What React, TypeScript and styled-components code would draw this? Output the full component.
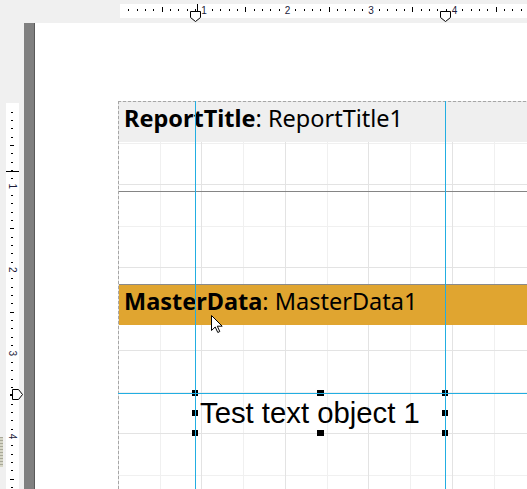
import React from "react";
import styled, { createGlobalStyle } from "styled-components";

const Global = createGlobalStyle`
  html, body { margin: 0; padding: 0; }
  body { background: #f0f0f0; font-family: "Noto Sans", sans-serif; }
`;

const Frame = styled.div`
  position: relative;
  width: 527px;
  height: 489px;
  overflow: hidden;
  background: #f0f0f0;
  display: flex;
  flex-direction: column;
`;

const TopRulerRow = styled.div`
  flex: none;
  height: 23px;
  box-sizing: border-box;
  padding: 4px 0 0 120px;
  display: flex;
  align-items: flex-start;
`;

const TopRuler = styled.div`
  flex: 1;
  height: 14px;
  background: #ffffff;
`;

const Workspace = styled.div`
  flex: 1;
  display: flex;
  min-height: 0;
`;

const LeftRulerColumn = styled.div`
  flex: none;
  width: 24px;
  box-sizing: border-box;
  padding: 80px 0 0 6px;
  display: flex;
  flex-direction: column;
`;

const LeftRuler = styled.div`
  flex: 1;
  width: 13px;
  background: #ffffff;
`;

const PageEdge = styled.div`
  flex: none;
  width: 10px;
  background: #808080;
  border-right: 1px solid #5a5a5a;
`;

const Page = styled.div`
  flex: 1;
  min-width: 0;
  background: #ffffff;
  box-sizing: border-box;
  padding: 78px 0 0 83px;
  display: flex;
  flex-direction: column;
  overflow: hidden;
`;

const DesignSurface = styled.div`
  position: relative;
  flex: 1;
  box-sizing: border-box;
  padding: 1px 0 0 1px;
  display: flex;
  flex-direction: column;
  background:
    repeating-linear-gradient(to right, #a6a6a6 0 3px, transparent 3px 5px) top left / 100% 1px no-repeat,
    repeating-linear-gradient(to bottom, #a6a6a6 0 3px, transparent 3px 5px) top left / 1px 100% no-repeat,
    repeating-linear-gradient(to right, #e3e3e3 0 1px, transparent 1px 83.5px),
    repeating-linear-gradient(to bottom, #e3e3e3 0 1px, transparent 1px 83px),
    repeating-linear-gradient(to right, #f0f0f0 0 1px, transparent 1px 41.75px),
    repeating-linear-gradient(to bottom, #f0f0f0 0 1px, transparent 1px 41.5px);
`;

const BandCaption = styled.div<{ $bg: string; $topLine?: boolean }>`
  flex: none;
  box-sizing: border-box;
  height: ${(p) => (p.$topLine ? "41px" : "40px")};
  background: ${(p) => p.$bg};
  border-top: ${(p) => (p.$topLine ? "1px solid #8a8a8a" : "none")};
  padding: 1px 0 0 5px;
  font-family: "Noto Sans", sans-serif;
  font-size: 23.5px;
  line-height: 30px;
  color: #000;
  white-space: nowrap;
`;

const BandName = styled.b`
  font-weight: 700;
`;

const BandBody = styled.div<{ $h: number; $bottomLine?: boolean }>`
  flex: none;
  height: ${(p) => p.$h}px;
  border-bottom: ${(p) => (p.$bottomLine ? "1px solid #858585" : "none")};
`;

const DataBandBody = styled.div`
  position: relative;
  flex: 1;
`;

const TextObject = styled.div`
  position: absolute;
  left: 76px;
  top: 68px;
  width: 250px;
  height: 40px;
  box-sizing: border-box;
  padding: 3px 0 0 5px;
  font-family: "Liberation Sans", Arial, sans-serif;
  font-size: 29.3px;
  color: #000;
  white-space: nowrap;
`;

const HandleFrame = styled.div`
  position: absolute;
  inset: -3px;
  display: grid;
  grid-template-columns: 6px 1fr 6px;
  grid-template-rows: 6px 1fr 6px;
  pointer-events: none;
`;

const Handle = styled.span<{ $col: number; $row: number; $w: number }>`
  grid-column: ${(p) => p.$col};
  grid-row: ${(p) => p.$row};
  justify-self: center;
  align-self: center;
  width: ${(p) => p.$w}px;
  height: 6px;
  background: #000;
`;

const VGuide = styled.div<{ $x: number }>`
  position: absolute;
  left: ${(p) => p.$x}px;
  top: 0;
  bottom: 0;
  width: 1px;
  background: #22aee2;
  z-index: 2;
`;

const HGuide = styled.div<{ $y: number }>`
  position: absolute;
  top: ${(p) => p.$y}px;
  left: 0;
  right: 0;
  height: 1px;
  background: #22aee2;
  z-index: 2;
`;

const RulerSvg = styled.svg`
  display: block;
  overflow: visible;
`;

const Grip = styled.div`
  position: absolute;
  left: 0;
  top: 437px;
  width: 3px;
  height: 30px;
  background: repeating-linear-gradient(to bottom, #a8a898 0 1px, #d6d6c6 1px 3px);
`;

const Cursor = styled.svg`
  position: absolute;
  left: 211px;
  top: 315px;
  overflow: visible;
  z-index: 5;
`;

const rulerText = {
  fontFamily: '"Liberation Sans", Arial, sans-serif',
  fontSize: 10,
  fill: "#1c1c3a",
} as const;

function TopRulerDrawing() {
  const items: React.ReactNode[] = [];
  for (let k = 1; k * 8.35 < 410; k++) {
    const x = Math.round(k * 8.35);
    if (k % 10 === 0) {
      items.push(
        <text key={k} x={83.5 * (k / 10) + 0.5} y={10} textAnchor="middle" style={rulerText}>
          {k / 10}
        </text>
      );
    } else if (k % 5 === 0) {
      items.push(<rect key={k} x={x} y={3} width={1} height={5} fill="#000" />);
    } else {
      items.push(<rect key={k} x={x} y={5} width={1} height={2} fill="#000" />);
    }
  }
  const marker = (cx: number) =>
    `${cx - 5},7.5 ${cx + 5},7.5 ${cx + 5},13.5 ${cx},17.5 ${cx - 5},13.5`;
  return (
    <RulerSvg width={407} height={14}>
      {items}
      <rect x={77} y={0} width={1} height={7} fill="#000" />
      <polygon points={marker(75.5)} fill="#fff" stroke="#000" strokeWidth={1} />
      <polygon points={marker(325.5)} fill="#fff" stroke="#000" strokeWidth={1} />
    </RulerSvg>
  );
}

function LeftRulerDrawing() {
  const items: React.ReactNode[] = [];
  for (let k = 1; k * 8.34 < 390; k++) {
    const y = Math.round(k * 8.34 + 0.3);
    if (k % 10 === 0) {
      const cy = 83.4 * (k / 10);
      items.push(
        <text
          key={k}
          transform={`translate(6.5 ${cy}) rotate(90)`}
          textAnchor="middle"
          y={3.5}
          style={rulerText}
        >
          {k / 10}
        </text>
      );
    } else if (k % 5 === 0) {
      items.push(<rect key={k} x={4} y={y} width={4} height={1} fill="#000" />);
    } else {
      items.push(<rect key={k} x={5} y={y} width={2} height={1} fill="#000" />);
    }
  }
  return (
    <RulerSvg width={13} height={386}>
      {items}
      <rect x={0} y={68} width={13} height={1} fill="#000" />
      <rect x={4} y={291} width={2.5} height={1} fill="#000" />
      <polygon
        points="6.5,286.5 12.5,286.5 16.5,291.5 12.5,296.5 6.5,296.5"
        fill="#fff"
        stroke="#000"
        strokeWidth={1}
      />
    </RulerSvg>
  );
}

const handles: Array<[number, number, number]> = [
  [1, 1, 6],
  [2, 1, 7],
  [3, 1, 6],
  [1, 2, 6],
  [3, 2, 6],
  [1, 3, 6],
  [2, 3, 7],
  [3, 3, 6],
];

export default function App() {
  return (
    <>
      <Global />
      <Frame>
        <TopRulerRow>
          <TopRuler>
            <TopRulerDrawing />
          </TopRuler>
        </TopRulerRow>
        <Workspace>
          <LeftRulerColumn>
            <LeftRuler>
              <LeftRulerDrawing />
            </LeftRuler>
          </LeftRulerColumn>
          <PageEdge />
          <Page>
            <DesignSurface>
              <BandCaption $bg="#efefef">
                <BandName>ReportTitle</BandName>: ReportTitle1
              </BandCaption>
              <BandBody $h={49} $bottomLine />
              <BandBody $h={92} />
              <BandCaption $bg="#e0a530" $topLine>
                <BandName>MasterData</BandName>: MasterData1
              </BandCaption>
              <DataBandBody>
                <TextObject>
                  Test text object 1
                  <HandleFrame>
                    {handles.map(([c, r, w]) => (
                      <Handle key={`${c}-${r}`} $col={c} $row={r} $w={w} />
                    ))}
                  </HandleFrame>
                </TextObject>
              </DataBandBody>
              <VGuide $x={77} />
              <VGuide $x={327} />
              <HGuide $y={292} />
            </DesignSurface>
          </Page>
        </Workspace>
        <Grip />
        <Cursor width={13} height={19} viewBox="0 0 13 19">
          <path
            d="M0.5 0.5 V15.5 L4.2 12 L6.8 17.5 L8.8 16.5 L6.3 11.2 H11.2 Z"
            fill="#fff"
            stroke="#000"
            strokeWidth={1}
            strokeLinejoin="miter"
          />
        </Cursor>
      </Frame>
    </>
  );
}
